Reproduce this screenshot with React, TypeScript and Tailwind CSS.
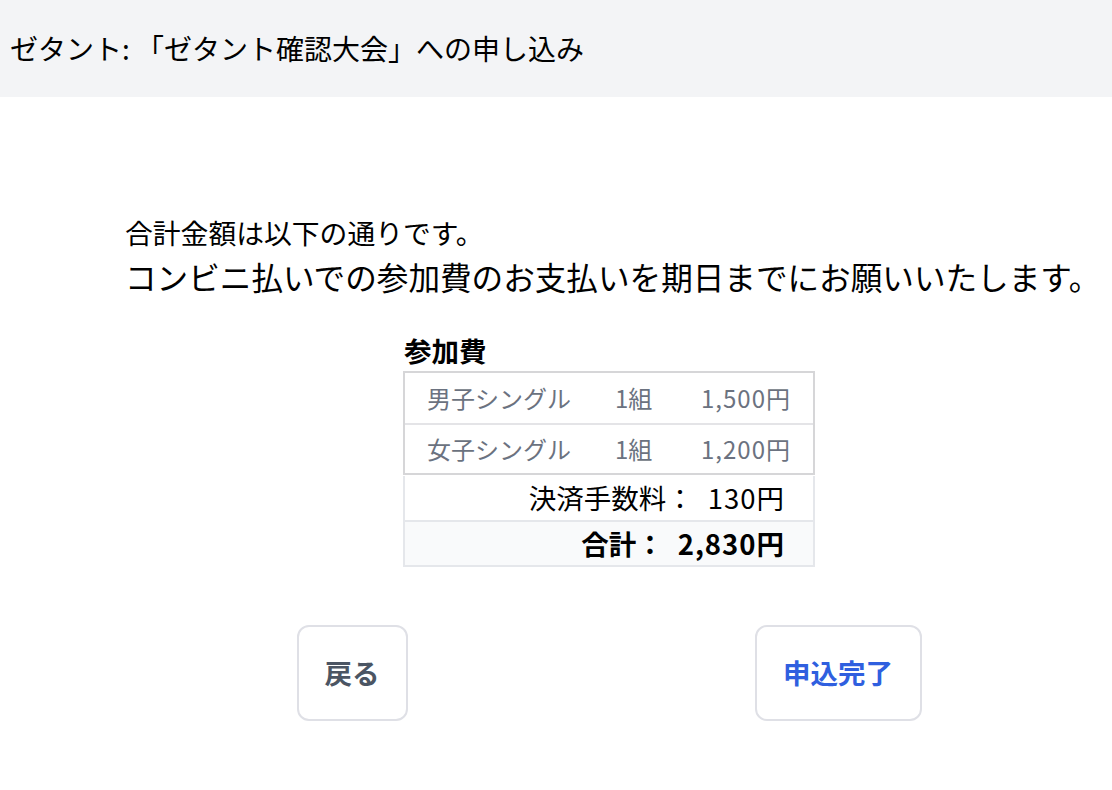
const fees = [
  { name: "男子シングル", count: "1組", price: "1,500円" },
  { name: "女子シングル", count: "1組", price: "1,200円" },
];

export default function App() {
  return (
    <div
      className="min-h-screen w-full bg-white text-black"
      style={{ fontFamily: '"Noto Sans CJK JP", "Noto Sans", sans-serif' }}
    >
      {/* header */}
      <header className="flex h-[97px] items-center bg-[#f3f4f6] px-[10px] text-[28px] leading-[41px]">
        ゼタント: 「ゼタント確認大会」への申し込み
      </header>

      <main className="ml-[125px] flex w-[968px] flex-col pt-[115px]">
        <p className="text-[27.8px] leading-[41px]">合計金額は以下の通りです。</p>
        <p className="whitespace-nowrap text-[31.6px] leading-[46px]">
          コンビニ払いでの参加費のお支払いを期日までにお願いいたします。
        </p>

        {/* fee table */}
        <div className="mt-[31px] flex w-[412px] flex-col self-center">
          <h2 className="pl-[1px] text-[27.5px] font-bold leading-[41px]">参加費</h2>
          <div className="border-2 border-[#d6d6d8]">
            {fees.map((f, i) => (
              <div
                key={f.name}
                className={`grid h-[50px] grid-cols-[188px_84px_1fr] items-center text-[24px] text-[#6b7280] ${
                  i > 0 ? "border-t-2 border-[#e4e4e7]" : ""
                }`}
              >
                <span className="px-[22px]">{f.name}</span>
                <span className="px-[22px]">{f.count}</span>
                <span className="px-[22px] text-right tracking-[1px]">{f.price}</span>
              </div>
            ))}
          </div>
          <div className="mt-[1px] border-x-2 border-b-2 border-[#e5e7eb]">
            <div className="flex h-[44px] items-center justify-end pr-[28px] text-[27.5px]">
              決済手数料：<span className="ml-[14px] tracking-[1px]">130円</span>
            </div>
            <div className="flex h-[45px] items-center justify-end border-t-2 border-[#e5e7eb] bg-[#f9fafb] pr-[28px] text-[27.5px] font-bold">
              合計：<span className="ml-[14px] tracking-[1px]">2,830円</span>
            </div>
          </div>
        </div>

        {/* actions */}
        <div className="mt-[58px] flex justify-center gap-[347px]">
          <button className="flex h-[96px] w-[111px] items-center justify-center rounded-[12px] border-2 border-[#dfe0e6] bg-white text-[27.5px] font-bold text-[#4b5563]">
            戻る
          </button>
          <button className="flex h-[96px] w-[167px] items-center justify-center rounded-[12px] border-2 border-[#dfe0e6] bg-white text-[27.5px] font-bold text-[#2f5fdf]">
            申込完了
          </button>
        </div>
      </main>
    </div>
  );
}
